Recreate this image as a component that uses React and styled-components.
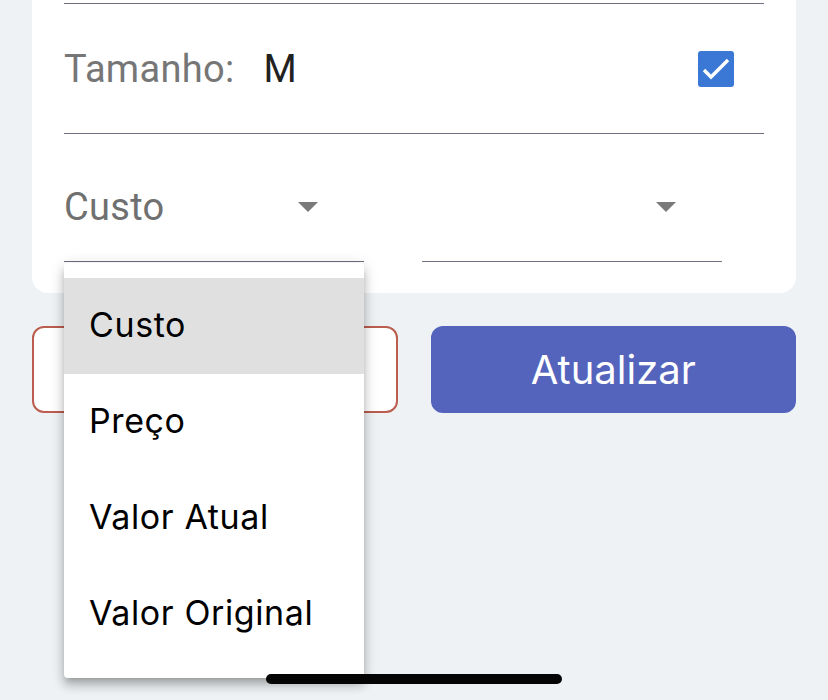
import styled, { createGlobalStyle } from 'styled-components';

const GlobalStyle = createGlobalStyle`
  html, body {
    margin: 0;
    padding: 0;
    background: #eef2f4;
  }
  * {
    box-sizing: border-box;
  }
`;

const Screen = styled.div`
  position: relative;
  width: 828px;
  height: 700px;
  overflow: hidden;
  background: #eef2f4;
`;

const Card = styled.section`
  margin: 0 32px;
  padding: 3px 32px 31px;
  background: #ffffff;
  border-radius: 0 0 16px 16px;
  font-family: Roboto, 'Noto Sans', sans-serif;
`;

const FieldRow = styled.div`
  display: flex;
  align-items: center;
  height: 131px;
  padding-right: 30px;
  border-top: 1px solid #6c6f7d;
  border-bottom: 1px solid #6c6f7d;
`;

const Label = styled.span`
  font-size: 38px;
  color: #767676;
  letter-spacing: 0.3px;
`;

const Value = styled.span`
  margin-left: 29px;
  font-size: 38px;
  color: #212121;
  flex: 1;
`;

const Checkbox = styled.span`
  display: flex;
  align-items: center;
  justify-content: center;
  width: 36px;
  height: 36px;
  border-radius: 3px;
  background: #3b78d5;
`;

const SelectRow = styled.div`
  display: flex;
  gap: 58px;
`;

const Select = styled.div`
  display: flex;
  align-items: center;
  width: 300px;
  height: 128px;
  padding: 18px 46px 0 0;
  border-bottom: 1px solid #6c6f7d;
`;

const SelectText = styled.span`
  flex: 1;
  font-size: 38px;
  color: #707070;
  letter-spacing: 0.3px;
`;

const Caret = styled.span`
  width: 0;
  height: 0;
  border-left: 10px solid transparent;
  border-right: 10px solid transparent;
  border-top: 10px solid #7a7a7a;
`;

const Actions = styled.div`
  display: flex;
  gap: 33px;
  margin: 33px 32px 0;
`;

const Button = styled.button`
  flex: 1;
  height: 87px;
  border-radius: 12px;
  font-family: Inter, 'Noto Sans', sans-serif;
  font-size: 40px;
  font-weight: 400;
  border: 2px solid ${(p) => (p.$primary ? '#5464bd' : '#bb5e4f')};
  background: ${(p) => (p.$primary ? '#5464bd' : '#ffffff')};
  color: ${(p) => (p.$primary ? '#ffffff' : '#bb5e4f')};
`;

const Menu = styled.ul`
  position: absolute;
  left: 64px;
  top: 263px;
  width: 300px;
  margin: 0;
  padding: 15px 0 16px;
  list-style: none;
  background: #ffffff;
  border-radius: 4px;
  box-shadow: 0 5px 6px -3px rgba(0, 0, 0, 0.2), 0 8px 10px 1px rgba(0, 0, 0, 0.14),
    0 3px 14px 2px rgba(0, 0, 0, 0.12);
`;

const MenuItem = styled.li`
  display: flex;
  align-items: center;
  height: 96px;
  padding: 0 0 3px 25px;
  font-family: Inter, 'Noto Sans', sans-serif;
  font-size: 34px;
  letter-spacing: 0.6px;
  color: #000000;
  background: ${(p) => (p.$active ? '#e0e0e0' : 'transparent')};
`;

const HomeIndicator = styled.div`
  position: absolute;
  left: 266px;
  top: 674px;
  width: 296px;
  height: 10px;
  border-radius: 5px;
  background: #050505;
`;

const options = ['Custo', 'Preço', 'Valor Atual', 'Valor Original'];

export default function App() {
  return (
    <Screen>
      <GlobalStyle />
      <Card>
        <FieldRow>
          <Label>Tamanho:</Label>
          <Value>M</Value>
          <Checkbox>
            <svg width="36" height="36" viewBox="0 0 36 36" fill="none">
              <path d="M6 19l7 7L30 9" stroke="#fff" strokeWidth="3.4" />
            </svg>
          </Checkbox>
        </FieldRow>
        <SelectRow>
          <Select>
            <SelectText>Custo</SelectText>
            <Caret />
          </Select>
          <Select>
            <SelectText />
            <Caret />
          </Select>
        </SelectRow>
      </Card>
      <Actions>
        <Button>Cancelar</Button>
        <Button $primary>Atualizar</Button>
      </Actions>
      <Menu>
        {options.map((o, i) => (
          <MenuItem key={o} $active={i === 0}>
            {o}
          </MenuItem>
        ))}
      </Menu>
      <HomeIndicator />
    </Screen>
  );
}
